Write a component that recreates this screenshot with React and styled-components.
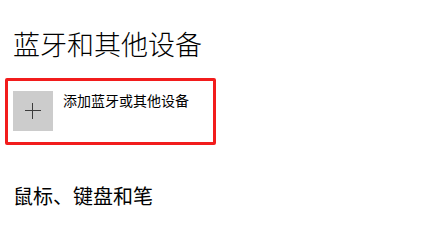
import React from "react";
import styled, { createGlobalStyle } from "styled-components";

const Global = createGlobalStyle`
  html, body { margin: 0; padding: 0; background: #ffffff; }
  body { font-family: "Noto Sans CJK SC", "Noto Sans", sans-serif; color: #000; }
`;

const Page = styled.div`
  width: 441px;
  height: 215px;
  box-sizing: border-box;
  padding: 30px 0 0 5px;
  display: flex;
  flex-direction: column;
  align-items: flex-start;
`;

const Title = styled.h1`
  margin: 0 0 20px 8px;
  font-size: 27px;
  line-height: 28px;
  font-weight: 300;
  color: #000;
`;

const AddCard = styled.div`
  box-sizing: border-box;
  width: 211px;
  height: 67px;
  border: 3px solid #f21c1c;
  border-radius: 2px;
  padding: 10px 5px;
  display: flex;
  align-items: flex-start;
  gap: 10px;
`;

const IconTile = styled.div`
  width: 40px;
  height: 40px;
  background: #cccccc;
  display: flex;
  align-items: center;
  justify-content: center;
  flex-shrink: 0;
`;

const CardLabel = styled.span`
  font-size: 14px;
  line-height: 14px;
  margin-top: 2px;
  color: #000;
`;

const Section = styled.h2`
  margin: 41px 0 0 8px;
  font-size: 20px;
  line-height: 20px;
  font-weight: 400;
  color: #000;
`;

export default function App() {
  return (
    <>
      <Global />
      <Page>
        <Title>蓝牙和其他设备</Title>
        <AddCard>
          <IconTile>
            <svg width="16" height="16" viewBox="0 0 16 16" shapeRendering="crispEdges">
              <path d="M7.5 0V16M0 7.5H16" stroke="#3c3c3c" strokeWidth="1" fill="none" />
            </svg>
          </IconTile>
          <CardLabel>添加蓝牙或其他设备</CardLabel>
        </AddCard>
        <Section>鼠标、键盘和笔</Section>
      </Page>
    </>
  );
}
